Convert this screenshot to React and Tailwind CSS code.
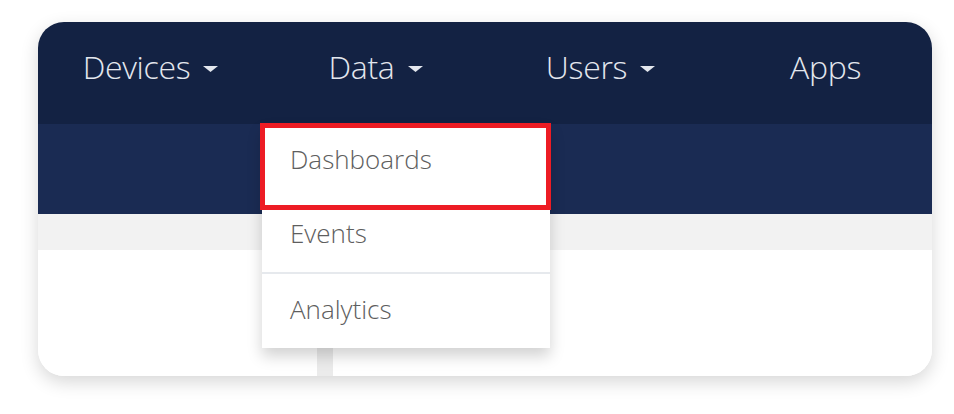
import { useState } from 'react'

function Caret() {
  return (
    <svg width="15" height="6" viewBox="0 0 15 6" className="ml-[13px] mt-[3px]">
      <polygon points="0,0 15,0 7.5,6" fill="#e3e7ee" />
    </svg>
  )
}

const navItems = [
  { label: 'Devices', caret: true },
  { label: 'Data', caret: true, open: true },
  { label: 'Users', caret: true },
  { label: 'Apps' },
]

function DataMenu() {
  return (
    <div className="absolute -left-[1px] top-full w-[288px] bg-white shadow-[0_8px_14px_rgba(0,0,0,0.18)] z-10">
      <div className="relative h-[74px] flex items-center pl-[28px] pb-[4px]">
        <span className="text-[26px] font-light text-[#5e5e5e]">Dashboards</span>
        {/* highlight box */}
        <div className="absolute -left-[2px] -top-[1px] w-[291px] h-[87px] border-[5px] border-[#ed1c24]" />
      </div>
      <div className="h-[74px] flex items-center pl-[28px] pb-[4px]">
        <span className="text-[26px] font-light text-[#5e5e5e]">Events</span>
      </div>
      <div className="h-[2px] bg-[#e6e9ed]" />
      <div className="h-[74px] flex items-center pl-[28px] pb-[4px]">
        <span className="text-[26px] font-light text-[#5e5e5e]">Analytics</span>
      </div>
    </div>
  )
}

export default function App() {
  const [items] = useState(navItems)

  return (
    <div className="w-[954px] h-[414px] bg-white pt-[22px] pl-[38px]" style={{ fontFamily: '"Open Sans", "Liberation Sans", sans-serif' }}>
      <div className="relative w-[894px] h-[354px] rounded-[26px] overflow-hidden bg-white shadow-[0_6px_18px_rgba(0,0,0,0.16)]">
        <nav className="grid grid-cols-[repeat(4,225px)] h-[102px] bg-[#132243]">
          {items.map((item) => (
            <div key={item.label} className="relative flex items-center justify-center pb-[12px]">
              <span className="text-[32px] font-light text-[#e3e7ee] tracking-[-0.3px]">{item.label}</span>
              {item.caret && <Caret />}
              {item.open && <DataMenu />}
            </div>
          ))}
        </nav>
        <div className="h-[90px] bg-[#1a2b53]" />
        <div className="h-[36px] bg-[#f2f2f2]" />
        <div className="flex h-[126px]">
          <div className="w-[279px] bg-white" />
          <div className="w-[16px] bg-[#ebebeb]" />
          <div className="flex-1 bg-white" />
        </div>
      </div>
    </div>
  )
}
